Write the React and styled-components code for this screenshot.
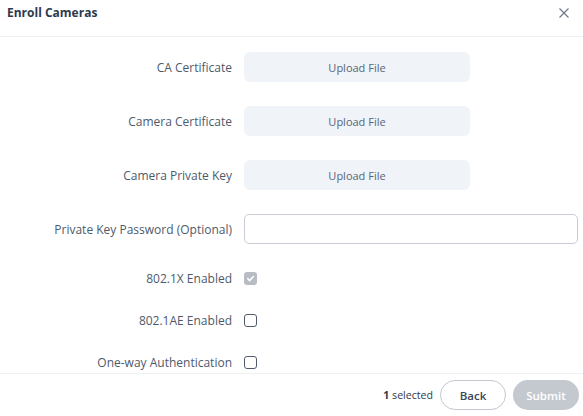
import React from 'react';
import styled, { createGlobalStyle } from 'styled-components';

const GlobalStyle = createGlobalStyle`
  html, body {
    margin: 0;
    padding: 0;
    background: #fff;
    font-family: "Open Sans", "Noto Sans", sans-serif;
  }
  * { box-sizing: border-box; }
`;

const Modal = styled.div`
  width: 583px;
  height: 416px;
  display: flex;
  flex-direction: column;
  background: #fff;
  overflow: hidden;
`;

const Header = styled.div`
  height: 37px;
  flex: none;
  display: flex;
  align-items: flex-start;
  justify-content: space-between;
  padding: 4px 13px 0 7px;
  border-bottom: 1px solid #eef0f3;
`;

const Title = styled.h1`
  margin: 0;
  font-size: 12px;
  line-height: 17px;
  font-weight: 700;
  color: #2e3a4b;
`;

const Close = styled.button`
  width: 12px;
  height: 12px;
  margin-top: 3px;
  padding: 0;
  border: none;
  background: none;
  display: flex;
  align-items: center;
  justify-content: center;
  cursor: pointer;
`;

const Body = styled.div`
  flex: 1;
  overflow: hidden;
  padding: 15px 5px 0 0;
  display: grid;
  grid-template-columns: 232px 1fr;
  column-gap: 12px;
  align-content: start;
`;

const Label = styled.label`
  font-size: 12px;
  color: #4e5a6b;
  text-align: right;
  display: flex;
  align-items: center;
  justify-content: flex-end;
  height: ${p => p.$h}px;
  margin-bottom: ${p => p.$mb}px;
`;

const Control = styled.div`
  display: flex;
  align-items: center;
  height: ${p => p.$h}px;
  margin-bottom: ${p => p.$mb}px;
`;

const UploadButton = styled.button`
  width: 226px;
  height: 30px;
  border: none;
  border-radius: 6px;
  background: #f0f3f7;
  color: #596577;
  font-family: inherit;
  font-size: 11px;
  cursor: pointer;
`;

const TextInput = styled.input`
  width: 100%;
  height: 30px;
  border: 1px solid #c9ced6;
  border-radius: 5px;
  padding: 0 8px;
  font-family: inherit;
  font-size: 12px;
  outline: none;
`;

const Box = styled.span`
  width: 13px;
  height: 13px;
  border-radius: 3px;
  display: inline-flex;
  align-items: center;
  justify-content: center;
  border: ${p => (p.$checked ? 'none' : '1.4px solid #4f5b6b')};
  background: ${p => (p.$checked ? '#b8bdc5' : '#fff')};
`;

const Footer = styled.div`
  height: 43px;
  flex: none;
  border-top: 1px solid #eef0f3;
  display: flex;
  align-items: center;
  justify-content: flex-end;
  gap: 7px;
  padding-right: 4px;
`;

const Count = styled.span`
  font-size: 10.6px;
  color: #2e3a4b;
  b { font-weight: 700; }
`;

const PillButton = styled.button`
  height: 30px;
  width: 66px;
  border-radius: 15px;
  font-family: inherit;
  font-size: 11.5px;
  font-weight: 600;
  cursor: pointer;
  border: ${p => (p.$primary ? 'none' : '1px solid #c3c8cf')};
  background: ${p => (p.$primary ? '#c4c9d0' : '#fff')};
  color: ${p => (p.$primary ? '#fff' : '#3b4656')};
`;

const Check = ({ checked }) => (
  <Box $checked={checked}>
    {checked && (
      <svg width="9" height="9" viewBox="0 0 10 10">
        <path d="M2 5.2 L4.1 7.3 L8.2 2.8" fill="none" stroke="#fff" strokeWidth="1.8" strokeLinecap="round" strokeLinejoin="round" />
      </svg>
    )}
  </Box>
);

const rows = [
  { label: 'CA Certificate', type: 'upload', h: 30, mb: 24 },
  { label: 'Camera Certificate', type: 'upload', h: 30, mb: 24 },
  { label: 'Camera Private Key', type: 'upload', h: 30, mb: 24 },
  { label: 'Private Key Password (Optional)', type: 'input', h: 30, mb: 24 },
  { label: '802.1X Enabled', type: 'check', checked: true, h: 20, mb: 22 },
  { label: '802.1AE Enabled', type: 'check', h: 20, mb: 22 },
  { label: 'One-way Authentication', type: 'check', h: 20, mb: 22 },
];

export default function App() {
  return (
    <Modal>
      <GlobalStyle />
      <Header>
        <Title>Enroll Cameras</Title>
        <Close aria-label="close">
          <svg width="10" height="10" viewBox="0 0 10 10">
            <path d="M0.5 0.5 L9.5 9.5 M9.5 0.5 L0.5 9.5" stroke="#6b7585" strokeWidth="1.1" />
          </svg>
        </Close>
      </Header>
      <Body>
        {rows.map(r => (
          <React.Fragment key={r.label}>
            <Label $h={r.h} $mb={r.mb}>{r.label}</Label>
            <Control $h={r.h} $mb={r.mb}>
              {r.type === 'upload' && <UploadButton>Upload File</UploadButton>}
              {r.type === 'input' && <TextInput type="password" />}
              {r.type === 'check' && <Check checked={r.checked} />}
            </Control>
          </React.Fragment>
        ))}
      </Body>
      <Footer>
        <Count><b>1</b> selected</Count>
        <PillButton>Back</PillButton>
        <PillButton $primary>Submit</PillButton>
      </Footer>
    </Modal>
  );
}
